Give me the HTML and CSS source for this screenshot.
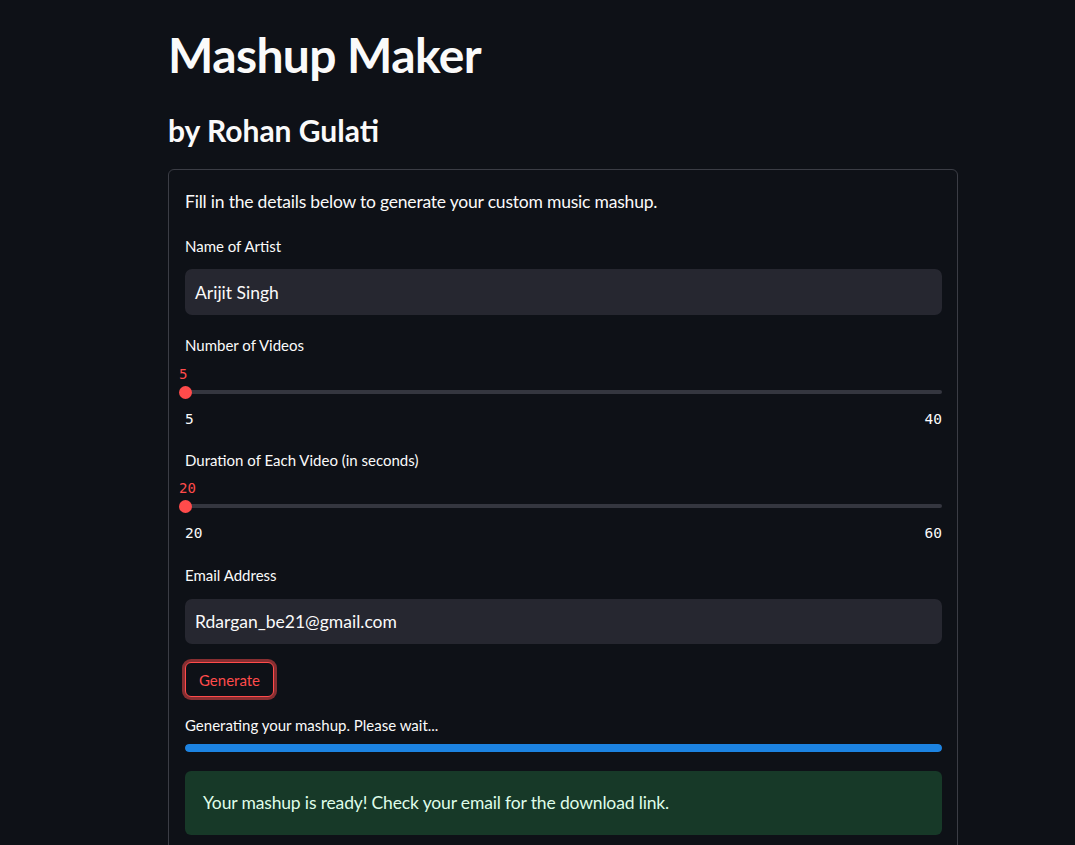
FILE: index.html
```html
<!DOCTYPE html>
<html lang="en">
<head>
<meta charset="utf-8">
<title>Mashup Maker</title>
<link rel="stylesheet" href="styles.css">
</head>
<body>
<main class="main">
  <h1 class="title">Mashup Maker</h1>
  <h3 class="subtitle">by Rohan Gulati</h3>
  <form class="form">
    <p class="intro">Fill in the details below to generate your custom music mashup.</p>

    <div class="field">
      <div class="label">Name of Artist</div>
      <div class="input">Arijit Singh</div>
    </div>

    <div class="field slider-field">
      <div class="label">Number of Videos</div>
      <div class="slider">
        <div class="slider-value">5</div>
        <div class="track"><span class="thumb"></span></div>
        <div class="ticks"><span>5</span><span>40</span></div>
      </div>
    </div>

    <div class="field slider-field">
      <div class="label">Duration of Each Video (in seconds)</div>
      <div class="slider">
        <div class="slider-value">20</div>
        <div class="track"><span class="thumb"></span></div>
        <div class="ticks"><span>20</span><span>60</span></div>
      </div>
    </div>

    <div class="field email-field">
      <div class="label">Email Address</div>
      <div class="input">Rdargan_be21@gmail.com</div>
    </div>

    <div class="button-row">
      <button type="button" class="btn">Generate</button>
    </div>

    <div class="status">Generating your mashup. Please wait...</div>
    <div class="progress"><div class="progress-fill" style="width: 100%"></div></div>

    <div class="success">Your mashup is ready! Check your email for the download link.</div>
  </form>
</main>
</body>
</html>
```

FILE: styles.css
```css
* { box-sizing: border-box; }

html, body {
  margin: 0;
  padding: 0;
  background: #0e1117;
  color: #fafafa;
  font-family: Lato, "Noto Sans", sans-serif;
  height: 100%;
  overflow: hidden;
}

.main {
  width: 790px;
  margin-left: 168px;
  display: flex;
  flex-direction: column;
}

.title {
  margin: 0;
  padding-top: 25px;
  font-size: 48px;
  line-height: 60px;
  font-weight: 700;
  letter-spacing: -0.6px;
}

.subtitle {
  margin: 0;
  margin-top: 25px;
  font-size: 30px;
  line-height: 40px;
  font-weight: 700;
}

.form {
  margin-top: 19px;
  border: 1px solid #3b3d45;
  border-radius: 6px;
  padding: 17px 15px 30px 16px;
  display: flex;
  flex-direction: column;
}

.intro {
  margin: 0;
  font-size: 17.5px;
  line-height: 29px;
  letter-spacing: -0.2px;
}

.field {
  display: flex;
  flex-direction: column;
}

.label {
  font-size: 15px;
  line-height: 24px;
  height: 24px;
}

.intro + .field { margin-top: 18px; }

.input {
  margin-top: 11px;
  height: 46px;
  background: #262730;
  border-radius: 7px;
  padding: 0 10px;
  display: flex;
  align-items: center;
  font-size: 17.5px;
}

.slider-field { margin-top: 18px; }
.slider-field + .slider-field { margin-top: 19px; }
.email-field { margin-top: 20px; }
.email-field .input { height: 45px; margin-top: 12px; }

.slider {
  margin-top: 7px;
  display: flex;
  flex-direction: column;
}

.slider-field + .slider-field .slider { margin-top: 6px; }

.slider-value {
  height: 20px;
  line-height: 20px;
  margin-left: -6px;
  font-family: "DejaVu Sans Mono", "Liberation Mono", monospace;
  font-size: 14px;
  color: #ff4b4b;
}

.track {
  position: relative;
  margin-top: 6px;
  height: 4px;
  border-radius: 2px;
  background: #34363f;
}

.thumb {
  position: absolute;
  left: -6.5px;
  top: -4.5px;
  width: 13px;
  height: 13px;
  border-radius: 50%;
  background: #ff4b4b;
}

.ticks {
  margin-top: 15px;
  display: flex;
  justify-content: space-between;
  height: 20px;
  line-height: 20px;
  font-family: "DejaVu Sans Mono", "Liberation Mono", monospace;
  font-size: 14.5px;
  color: #fafafa;
}

.button-row {
  margin-top: 18px;
  display: flex;
}

.btn {
  width: 89px;
  height: 35px;
  border: 1px solid #ff4b4b;
  border-radius: 6px;
  background: #0e1117;
  color: #ff4b4b;
  font-family: Lato, "Noto Sans", sans-serif;
  font-size: 15px;
  padding: 0;
  box-shadow: 0 0 0 3px rgba(255, 75, 75, 0.5);
  cursor: pointer;
}

.status {
  margin-top: 16px;
  font-size: 15px;
  line-height: 24px;
}

.progress {
  margin-top: 7px;
  height: 8px;
  border-radius: 4px;
  background: #262730;
  overflow: hidden;
}

.progress-fill {
  height: 100%;
  background: #1c83e1;
  border-radius: 4px;
}

.success {
  margin-top: 19px;
  background: #173928;
  color: #dffde9;
  border-radius: 6px;
  padding: 17px 18px 18px;
  font-size: 17.5px;
  line-height: 29px;
  letter-spacing: -0.15px;
}
```
